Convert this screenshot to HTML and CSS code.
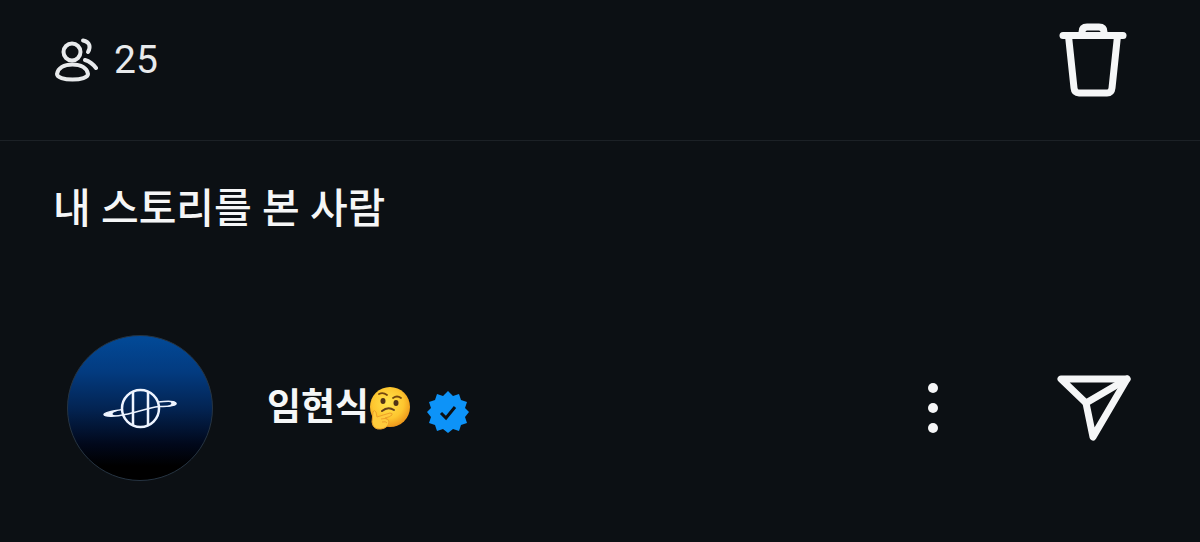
FILE: index.html
```html
<!DOCTYPE html>
<html lang="ko">
<head>
    <meta charset="utf-8">
    <meta name="viewport" content="width=device-width, initial-scale=1.0">
    <title>내 스토리를 본 사람</title>
    <link rel="stylesheet" href="styles.css">
</head>
<body>
<header class="story_header">
    <div class="viewer_count">
        <svg class="icon_people" viewBox="0 0 44 46" aria-hidden="true">
            <circle cx="18" cy="15" r="8.5"/>
            <path d="M3 37C4 31 10 27.500 18.500 27.500S33 31 34 37C34 40.500 27 42.500 18.500 42.500S3 40.500 3 37Z"/>
            <path d="M29 3.500C36 5 37 10 34 15"/>
            <path d="M31 23C36 24.500 39 27 42 31"/>
        </svg>
        <span>25</span>
    </div>
    <button type="button" class="icon_button" aria-label="삭제">
        <svg class="icon_trash" viewBox="0 0 68 74" aria-hidden="true">
            <path d="M4 12.500H64"/>
            <path d="M23 12V9Q23 4 28 4H40Q45 4 45 9V12"/>
            <path d="M9.500 13L15 65Q15.500 70 20 70H48Q52.500 70 53 65L58.500 13"/>
        </svg>
    </button>
</header>
<main class="viewers">
    <h1 class="viewers_title">내 스토리를 본 사람</h1>
    <ul class="viewer_list">
        <li class="viewer">
            <svg class="avatar" viewBox="0 0 146 146" role="img" aria-label="프로필 사진">
                <defs>
                    <linearGradient id="sky" x1="0" y1="0" x2="0" y2="1">
                        <stop offset="0" stop-color="#024a98"/>
                        <stop offset="0.25" stop-color="#033b80"/>
                        <stop offset="0.5" stop-color="#032453"/>
                        <stop offset="0.75" stop-color="#01081b"/>
                        <stop offset="0.9" stop-color="#000"/>
                    </linearGradient>
                </defs>
                <circle cx="73" cy="73" r="72.500" fill="url(#sky)" stroke="#263442"/>
                <g class="planet">
                    <circle cx="73.500" cy="73.500" r="18.500"/>
                    <path d="M66 57V90M81 57V90"/>
                    <path class="ring" d="M56 74.500C44 76 37 77.500 37 79.500C37 82 50 81.500 58 79.500C71 77 80 73 92 71.500C102 71.500 109 71 109 68.500C109 66 101 66 91 67"/>
                    <path class="tip" d="M50 76C44 76 37 78 37 79.500C38 82 45 81 50 81C44 80 44 78 50 76ZM102 66C109 66 110 68 109 69.500C107 71 103 71.500 98 71.500C105 70 106 68 102 66Z"/>
                </g>
            </svg>
            <div class="viewer_name">
                <span>임현식</span>
                <svg class="emoji" viewBox="0 0 42 44" role="img" aria-label="생각하는 얼굴">
                    <defs>
                        <radialGradient id="face" cx="0.45" cy="0.4" r="0.6">
                            <stop offset="0" stop-color="#ffe34d"/>
                            <stop offset="0.65" stop-color="#fdc62f"/>
                            <stop offset="1" stop-color="#ee981b"/>
                        </radialGradient>
                    </defs>
                    <circle cx="21" cy="21" r="20" fill="url(#face)"/>
                    <ellipse cx="14" cy="15" rx="2.500" ry="3" fill="#513317"/>
                    <ellipse cx="27" cy="17" rx="2.500" ry="3" fill="#513317"/>
                    <path d="M10 8Q14 6 18 9M24 12Q28 9 32 12" fill="none" stroke="#75470f" stroke-width="1.800" stroke-linecap="round"/>
                    <path d="M13 25Q19 20 25 24" fill="none" stroke="#66401b" stroke-width="2" stroke-linecap="round"/>
                    <path d="M4 26Q5 23 7 26L8 31Q14 29 21 27Q24 27 23 29Q21 31 16 32Q20 33 20 36Q19 42 12 43Q4 44 3 36Z" fill="#ffcb3c" stroke="#eda028" stroke-linejoin="round"/>
                    <path d="M12 33Q17 32 18 33M13 36Q17 35 18 37" fill="none" stroke="#eda028"/>
                </svg>
                <svg class="badge" viewBox="0 0 42 42" role="img" aria-label="인증됨">
                    <path fill="#0d93f8" d="M21 0L26 5L32 3L34 9L40 11L38 17L42 21L38 26L40 32L34 34L32 40L26 38L21 42L16 38L10 40L8 34L2 32L4 26L0 21L4 17L2 11L8 9L10 3L16 5Z"/>
                    <path class="check" d="M14 22L19 27L28 16"/>
                </svg>
            </div>
            <button type="button" class="icon_button" aria-label="더 보기">
                <svg class="icon_more" viewBox="0 0 12 52" aria-hidden="true">
                    <circle cx="6" cy="6" r="5"/>
                    <circle cx="6" cy="26" r="5"/>
                    <circle cx="6" cy="46" r="5"/>
                </svg>
            </button>
            <button type="button" class="icon_button" aria-label="메시지 보내기">
                <svg class="icon_send" viewBox="0 0 74 66" aria-hidden="true">
                    <path d="M4 4H70L36 62L29 28Z"/>
                    <path d="M29 28L70 4"/>
                </svg>
            </button>
        </li>
    </ul>
</main>
</body>
</html>
```
FILE: styles.css
```css
body {
    margin: 0;
    background-color: #0c1014;
    color: #f5f6f7;
    font-family: Roboto, "Noto Sans CJK KR", sans-serif;
}

svg {
    display: block;
    flex-shrink: 0;
}

.icon_button {
    padding: 0;
    border: 0;
    background: none;
    color: inherit;
    cursor: pointer;
}

.story_header {
    display: flex;
    align-items: center;
    justify-content: space-between;
    padding: 23px 73px 43px 54px;
    border-bottom: 1px solid #1c2126;
}

.viewer_count {
    display: flex;
    align-items: center;
    gap: 16px;
    font-size: 39px;
    line-height: 46px;
    color: #e8eaec;
}

.icon_people {
    width: 44px;
    height: 46px;
    fill: none;
    stroke: currentColor;
    stroke-width: 4;
    stroke-linecap: round;
}

.icon_trash {
    width: 68px;
    height: 74px;
    fill: none;
    stroke: currentColor;
    stroke-width: 7;
    stroke-linecap: round;
}

.viewers {
    padding: 38px 69px 60px 53px;
}

.viewers_title {
    margin: 0;
    font-size: 41px;
    font-weight: 500;
    line-height: 60px;
}

.viewer_list {
    margin: 0;
    padding: 96px 0 0 14px;
    list-style: none;
}

.viewer {
    display: flex;
    align-items: center;
}

.avatar {
    width: 146px;
    height: 146px;
    margin-right: 54px;
}

.planet {
    fill: none;
    stroke: #eef4ff;
    stroke-width: 2.5;
}

.planet .ring {
    stroke-width: 1.5;
}

.planet .tip {
    fill: #eef4ff;
    stroke: none;
}

.viewer_name {
    display: flex;
    flex: 1;
    align-items: center;
    font-size: 37px;
    font-weight: 700;
    line-height: 54px;
}

.emoji {
    width: 42px;
    height: 44px;
}

.badge {
    width: 42px;
    height: 42px;
    margin: 8px 0 0 16px;
}

.badge .check {
    fill: none;
    stroke: #0c1014;
    stroke-width: 3;
}

.icon_more {
    width: 12px;
    height: 52px;
    margin-right: 118px;
    fill: currentColor;
}

.icon_send {
    width: 74px;
    height: 66px;
    fill: none;
    stroke: currentColor;
    stroke-width: 7;
    stroke-linecap: round;
    stroke-linejoin: round;
}
```
